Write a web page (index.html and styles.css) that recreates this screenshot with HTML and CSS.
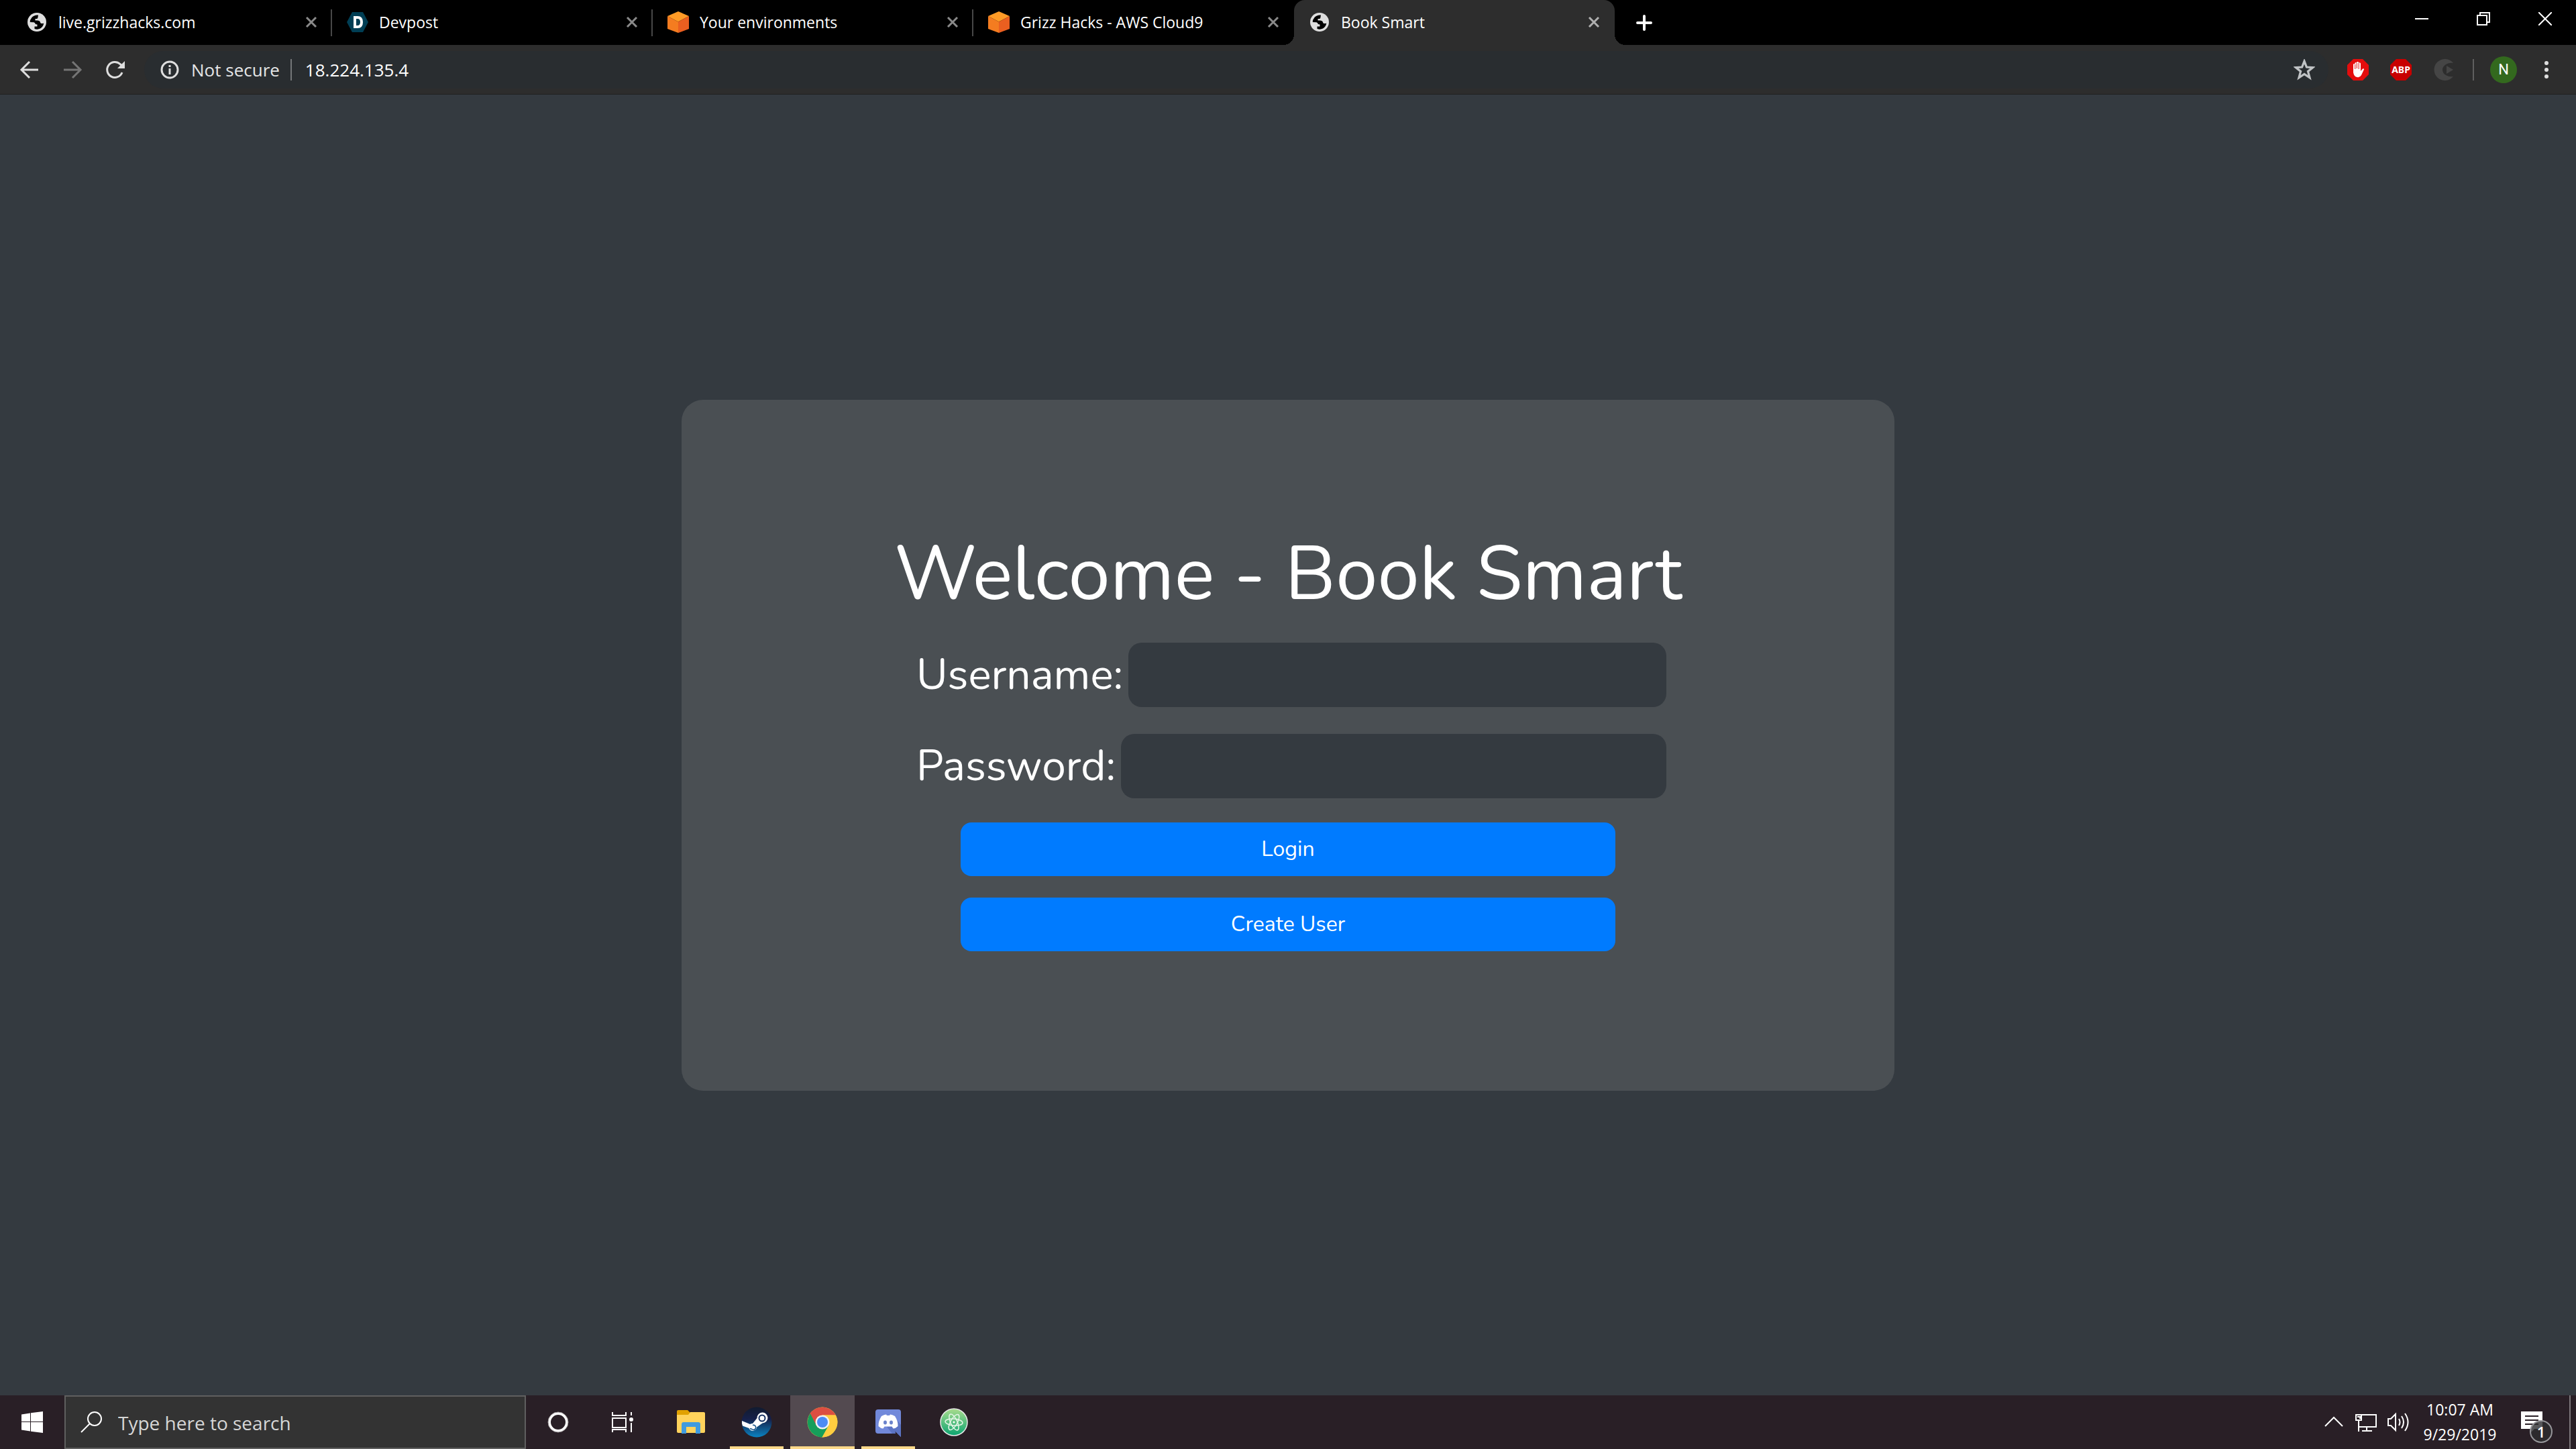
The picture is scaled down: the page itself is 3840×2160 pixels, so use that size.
FILE: index.html
```html
<!DOCTYPE html>
<html lang="en">
<head>
    <meta charset="UTF-8">
    <meta name="viewport" content="width=device-width, initial-scale=1.0">
    <title>Book Smart</title>
    <link rel="stylesheet" href="styles.css">
</head>
<body>
    <!-- shared icons -->
    <svg class="sprite" aria-hidden="true">
        <symbol id="globe" viewBox="0 0 28 28">
            <circle cx="14" cy="14" r="14" fill="#dedede"/>
            <path class="cut" d="M16 3.500Q10 3 6.500 7Q3.500 10.500 3.800 14L9.500 14.300Q11.500 15 11.800 17L14.500 17.500V20.500H10.500V24Q15 25.500 19 23.500Q23.500 21 24.300 15.500Q22 16.500 19.500 15.500L18.500 13Q17.500 11.500 15 11.500H11.500V9H14Q15.500 8.500 15.500 6.500Z"/>
        </symbol>
        <symbol id="close" viewBox="0 0 18 18">
            <path d="M2 2L16 16M16 2L2 16" fill="none" stroke="currentColor" stroke-width="3"/>
        </symbol>
        <symbol id="cube" viewBox="0 0 32 32">
            <path d="M16 0L32 7L16 15.500L0 7Z" fill="#ff9b26"/>
            <path d="M0 7L16 15.500V32L0 26Z" fill="#f47c20"/>
            <path d="M32 7L16 15.500V32L32 26Z" fill="#ea5f20"/>
        </symbol>
    </svg>

    <header class="browser">
        <nav class="tabs">
            <div class="tab">
                <svg class="tab-icon globe"><use href="#globe"/></svg>
                <a class="tab-title" href="#">live.grizzhacks.com</a>
                <button class="tab-close" aria-label="Close tab"><svg><use href="#close"/></svg></button>
            </div>
            <div class="tab">
                <svg class="tab-icon" viewBox="0 0 32 32">
                    <path d="M8 1H24L32 16L24 31H8L0 16Z" fill="#003e54"/>
                    <path d="M10 7H16Q24 7 24 16Q24 25 16 25H10ZM14 11V21H16Q20 21 20 16Q20 11 16 11Z" fill="#fff" fill-rule="evenodd"/>
                </svg>
                <a class="tab-title" href="#">Devpost</a>
                <button class="tab-close" aria-label="Close tab"><svg><use href="#close"/></svg></button>
            </div>
            <div class="tab">
                <svg class="tab-icon"><use href="#cube"/></svg>
                <a class="tab-title" href="#">Your environments</a>
                <button class="tab-close" aria-label="Close tab"><svg><use href="#close"/></svg></button>
            </div>
            <div class="tab">
                <svg class="tab-icon"><use href="#cube"/></svg>
                <a class="tab-title" href="#">Grizz Hacks - AWS Cloud9</a>
                <button class="tab-close" aria-label="Close tab"><svg><use href="#close"/></svg></button>
            </div>
            <div class="tab active">
                <svg class="tab-icon globe"><use href="#globe"/></svg>
                <a class="tab-title" href="#">Book Smart</a>
                <button class="tab-close" aria-label="Close tab"><svg><use href="#close"/></svg></button>
            </div>
            <button class="new-tab" aria-label="New tab">
                <svg viewBox="0 0 24 24"><path d="M12 2V22M2 12H22" stroke="#fff" stroke-width="4" stroke-linecap="round"/></svg>
            </button>
            <div class="window-buttons">
                <button aria-label="Minimize"><svg viewBox="0 0 20 20"><path d="M0 10H20" stroke="#fff" stroke-width="2"/></svg></button>
                <button aria-label="Restore"><svg viewBox="0 0 20 20"><path d="M1 5H15V19H1ZM5 5V1H19V15H15" fill="none" stroke="#fff" stroke-width="2"/></svg></button>
                <button aria-label="Close"><svg viewBox="0 0 20 20"><path d="M0 0L20 20M20 0L0 20" stroke="#fff" stroke-width="2"/></svg></button>
            </div>
        </nav>
        <div class="toolbar">
            <button class="nav-btn" aria-label="Back"><svg viewBox="0 0 32 32"><path d="M29 16H4M16 4L4 16L16 28" fill="none" stroke="#dedede" stroke-width="3"/></svg></button>
            <button class="nav-btn" aria-label="Forward"><svg viewBox="0 0 32 32"><path d="M3 16H28M16 4L28 16L16 28" fill="none" stroke="#757575" stroke-width="3"/></svg></button>
            <button class="nav-btn" aria-label="Reload"><svg viewBox="0 0 32 32"><path d="M26 20A11.500 11.500 0 1 1 23 7.500L26 10" fill="none" stroke="#dedede" stroke-width="3"/><path d="M30 3V14H19Z" fill="#dedede"/></svg></button>
            <div class="omnibox">
                <svg class="info" viewBox="0 0 28 28"><circle cx="14" cy="14" r="12" fill="none" stroke="#dedede" stroke-width="3"/><path d="M14 12V21M14 7V10" stroke="#dedede" stroke-width="3"/></svg>
                <span class="not-secure">Not secure</span>
                <input class="url" type="text" value="18.224.135.4" aria-label="Address">
                <button class="star" aria-label="Bookmark this page"><svg viewBox="0 0 30 30"><path d="M15 3L18.200 11.300L27 11.800L20.100 17.300L22.500 26L15 21L7.500 26L9.900 17.300L3 11.800L11.800 11.300Z" fill="none" stroke="#c0c3c5" stroke-width="3"/></svg></button>
            </div>
            <div class="extensions">
                <button aria-label="AdBlock"><svg viewBox="0 0 32 32"><path d="M9 0H23L32 9V23L23 32H9L0 23V9Z" fill="#e40d0d"/><path d="M9 8Q10 6 11.500 8V6Q12.500 4 14 6V5Q15.500 3 17 5V6Q18.500 4.500 20 6.500V18L23 14.500Q25 13.500 25 15.500L21 24Q18.500 28 15 27Q10 26.500 9 20Z" fill="#fff"/><path d="M11.700 8V15M14.300 6V14M17.200 6V15" stroke="#e40d0d"/></svg></button>
                <button aria-label="Adblock Plus"><svg viewBox="0 0 32 32"><path d="M9 0H23L32 9V23L23 32H9L0 23V9Z" fill="#c80000"/><text class="abp" x="16" y="21" text-anchor="middle">ABP</text></svg></button>
                <button aria-label="Video extension"><svg viewBox="0 0 32 32"><path d="M30 6A16 16 0 1 0 30 26Q24 27 19 24Q14 21 14 16Q14 11 19 8Q24 5 30 6Z" fill="#454545"/><path d="M20 10L30 16L20 22Z" fill="#454545"/></svg></button>
            </div>
            <button class="avatar" aria-label="Profile">N</button>
            <button class="menu" aria-label="Menu"><svg viewBox="0 0 32 32"><circle cx="16" cy="6" r="3" fill="#dedede"/><circle cx="16" cy="16" r="3" fill="#dedede"/><circle cx="16" cy="26" r="3" fill="#dedede"/></svg></button>
        </div>
    </header>

    <main class="page">
        <form class="card">
            <h1>Welcome - Book Smart</h1>
            <div class="field">
                <label for="username">Username:</label>
                <input type="text" id="username">
            </div>
            <div class="field">
                <label for="password">Password:</label>
                <input type="password" id="password">
            </div>
            <button class="btn" type="button">Login</button>
            <button class="btn" type="button">Create User</button>
        </form>
    </main>

    <footer class="taskbar">
        <button class="start" aria-label="Start"><svg viewBox="0 0 32 32"><path d="M0 4.500L13 2.500V15H0ZM14 2.300L32 0V15H14ZM0 16H13V29.500L0 27.500ZM14 16H32V32L14 29.700Z" fill="#fff"/></svg></button>
        <label class="search">
            <svg viewBox="0 0 32 32"><circle cx="21" cy="11" r="10" fill="none" stroke="#fff" stroke-width="2"/><path d="M14 18L1 31" stroke="#fff" stroke-width="2"/></svg>
            <input type="text" placeholder="Type here to search" aria-label="Search">
        </label>
        <button class="task" aria-label="Cortana"><svg viewBox="0 0 48 48"><circle cx="24" cy="24" r="13" fill="none" stroke="#fff" stroke-width="4"/><circle cx="24" cy="24" r="15" fill="none" stroke="#9b9698" stroke-width="1"/></svg></button>
        <button class="task" aria-label="Task View"><svg viewBox="0 0 48 48"><path d="M9 9V14H29V9M9 18H29V32H9ZM9 39V35H29V39M37 9V14M37 25V39" fill="none" stroke="#fff" stroke-width="2"/><circle cx="37" cy="20" r="3" fill="#fff"/></svg></button>
        <div class="apps">
            <button class="task" aria-label="File Explorer"><svg viewBox="0 0 48 48"><path d="M3 8Q3 6 5 6H19L23 10H43Q45 10 45 12V14H3Z" fill="#e1a100"/><path d="M3 13H20L23 9H43Q45 9 45 11V38Q45 40 43 40H5Q3 40 3 38Z" fill="#ffd35c"/><path d="M10 41V27Q10 24 13 24H35Q38 24 38 27V41H31V31H17V41Z" fill="#3f9be0"/></svg></button>
            <button class="task open" aria-label="Steam">
                <svg viewBox="0 0 48 48">
                    <defs><linearGradient id="steam" x1="0" y1="0" x2="0" y2="1"><stop offset="0" stop-color="#111b2f"/><stop offset="0.400" stop-color="#16204a"/><stop offset="1" stop-color="#0a84c2"/></linearGradient></defs>
                    <circle cx="24" cy="24" r="22.500" fill="url(#steam)"/>
                    <path d="M2 22L14 27Q16 26 18 26L24.500 18A8 8 0 1 1 32.500 25.500L24 31.500A6 6 0 0 1 12.500 33L3 29.500Q1.500 26 2 22Z" fill="#fff"/>
                    <circle cx="32" cy="18" r="4.500" fill="#fff" stroke="#173263" stroke-width="2"/>
                    <path d="M14 33.500L17 34.500A3.500 3.500 0 1 0 18 28.500" fill="none" stroke="#125086" stroke-width="1.500"/>
                </svg>
            </button>
            <button class="task current" aria-label="Chrome">
                <svg viewBox="0 0 48 48">
                    <circle cx="24" cy="24" r="22.500" fill="#ffcd40"/>
                    <path d="M24 24L14.500 29.500L5 12A22.500 22.500 0 0 1 43.700 13.500H24Z" fill="#dc4e41"/>
                    <path d="M5.800 11A22.500 22.500 0 0 0 23.500 46.500L33 29.500L24 24L15 29Z" fill="#169e5a"/>
                    <path d="M33 29.500L23.500 46.500A22.500 22.500 0 0 0 43.700 13.500H24L30 17Z" fill="#ffcd40"/>
                    <circle cx="24" cy="24" r="10.500" fill="#f1f1f1"/>
                    <circle cx="24" cy="24" r="8" fill="#4c8bf5"/>
                </svg>
            </button>
            <button class="task open" aria-label="Discord">
                <svg viewBox="0 0 48 48">
                    <path d="M9 5H39Q43 5 43 9V46L34 37L35 41H9Q5 41 5 37V9Q5 5 9 5Z" fill="#7289da"/>
                    <path d="M22 31L30 41H35L34 37L43 46V28L38 22Z" fill="#5c74c4"/>
                    <path d="M14 15Q18 12.500 21 12.500L22 14H26L27 12.500Q30 12.500 34 15Q39 23 38.500 30Q35 33.500 31.500 33.500L29.500 30.500H18.500L16.500 33.500Q13 33.500 9.500 30Q9 23 14 15Z" fill="#fff"/>
                    <ellipse cx="19.500" cy="24.500" rx="2.500" ry="3" fill="#6b83cb"/>
                    <ellipse cx="28.500" cy="24.500" rx="2.500" ry="3" fill="#6b83cb"/>
                </svg>
            </button>
            <button class="task" aria-label="Atom">
                <svg viewBox="0 0 48 48">
                    <defs><linearGradient id="atom" x1="0" y1="0" x2="0" y2="1"><stop offset="0" stop-color="#a9dc8e"/><stop offset="1" stop-color="#0ba470"/></linearGradient></defs>
                    <circle cx="24" cy="24" r="20" fill="url(#atom)" stroke="#e9e9e9" stroke-width="1.500"/>
                    <g fill="none" stroke="#e4f5e6" stroke-width="1.500">
                        <ellipse cx="24" cy="24" rx="13" ry="5" transform="rotate(5 24 24)"/>
                        <ellipse cx="24" cy="24" rx="13" ry="5" transform="rotate(65 24 24)"/>
                        <ellipse cx="24" cy="24" rx="13" ry="5" transform="rotate(120 24 24)"/>
                    </g>
                    <circle cx="24" cy="24" r="1.500" fill="#fff"/>
                </svg>
            </button>
        </div>
        <div class="tray">
            <button aria-label="Show hidden icons"><svg viewBox="0 0 32 32"><path d="M3 22L16 9L29 22" fill="none" stroke="#fff" stroke-width="2"/></svg></button>
            <button aria-label="Network"><svg viewBox="0 0 32 32"><path d="M8 5H31V23H6M17 23V28M10 29H25M1 5H9V13H1ZM5 13V30M3 8H7V11" fill="none" stroke="#fff" stroke-width="2"/></svg></button>
            <button aria-label="Volume"><svg viewBox="0 0 32 32"><path d="M1 11H5L12 4V28L5 21H1ZM17 11Q20 16 17 21M21 7Q27 16 21 25M26 3Q35 16 26 29" fill="none" stroke="#fff" stroke-width="2"/></svg></button>
            <button class="clock"><span>10:07 AM</span><span>9/29/2019</span></button>
            <button class="notifications" aria-label="Notifications"><svg viewBox="0 0 32 32"><path d="M0 0H32V26H20L14 32V26H0Z" fill="#fff"/><path d="M6 7H26M6 13H26M6 19H26" stroke="#291f26" stroke-width="2"/></svg><span class="badge">1</span></button>
            <button class="show-desktop" aria-label="Show desktop"></button>
        </div>
    </footer>
</body>
</html>
```
FILE: styles.css
```css
* {
    box-sizing: border-box;
}
html, body {
    margin: 0;
    padding: 0;
    height: 100vh;
    overflow: hidden;
}
body {
    display: flex;
    flex-direction: column;
    background-color: #343a40;
    color: white;
    font-family: "Segoe UI", "Open Sans", "Noto Sans", sans-serif;
}
button, input {
    margin: 0;
    padding: 0;
    border: none;
    background: none;
    color: inherit;
    font-family: inherit;
}
button {
    display: flex;
    align-items: center;
    justify-content: center;
    flex: none;
    cursor: pointer;
}
svg {
    flex: none;
}
.sprite {
    position: absolute;
    width: 0;
    height: 0;
}

/* tab strip */
.browser {
    flex: none;
    border-bottom: 1px solid #202020;
}
.tabs {
    display: flex;
    height: 67px;
    padding-left: 17px;
    background-color: #000;
}
.tab {
    display: flex;
    align-items: center;
    flex: 0 1 478px;
    min-width: 0;
    padding: 0 22px 2px;
    position: relative;
    color: #8a8a8a;
}
.tab::after {
    content: "";
    position: absolute;
    right: 0;
    top: 14px;
    width: 2px;
    height: 40px;
    background-color: #484848;
}
.tab-icon {
    width: 32px;
    height: 32px;
}
.tab-icon.globe {
    padding: 2px;
}
.cut {
    fill: #000;
}
.tab-title {
    flex: 1;
    min-width: 0;
    margin-left: 16px;
    overflow: hidden;
    color: white;
    font-size: 23px;
    line-height: 32px;
    text-decoration: none;
    white-space: nowrap;
}
.tab-close svg {
    width: 18px;
    height: 18px;
}
.tab.active {
    background-color: #2d2d2d;
    border-radius: 16px 16px 0 0;
    color: #b0b0b0;
}
.tab.active::before, .tab.active::after {
    content: "";
    position: absolute;
    top: auto;
    bottom: 0;
    width: 16px;
    height: 16px;
    background: radial-gradient(circle at 0 0, #000 16px, #2d2d2d 16px);
}
.tab.active::before {
    left: -16px;
}
.tab.active::after {
    right: -16px;
    background: radial-gradient(circle at 100% 0, #000 16px, #2d2d2d 16px);
}
.tab:has(+ .active)::after {
    display: none;
}
.new-tab {
    width: 88px;
}
.new-tab svg {
    width: 24px;
    height: 24px;
}
.window-buttons {
    display: flex;
    margin-left: auto;
}
.window-buttons button {
    width: 92px;
    height: 56px;
}
.window-buttons svg {
    width: 20px;
    height: 20px;
}

/* toolbar */
.toolbar {
    display: flex;
    align-items: center;
    height: 73px;
    padding: 0 28px 0 12px;
    background-color: #2d2d2d;
}
.nav-btn {
    width: 64px;
    height: 56px;
}
.nav-btn svg {
    width: 32px;
    height: 32px;
}
.omnibox {
    display: flex;
    align-items: center;
    flex: 1;
    min-width: 0;
    height: 56px;
    margin-left: 11px;
    padding: 0 20px 0 24px;
    border-radius: 28px;
    background-color: #292d30;
}
.info {
    width: 28px;
    height: 28px;
}
.not-secure {
    margin-left: 18px;
    padding-right: 16px;
    border-right: 2px solid #757779;
    color: #e4e5e6;
    font-size: 26px;
    line-height: 32px;
    white-space: nowrap;
}
.url {
    flex: 1;
    min-width: 0;
    margin-left: 20px;
    font-size: 26px;
    line-height: 32px;
}
.star svg {
    width: 32px;
    height: 32px;
}
.extensions {
    display: flex;
    gap: 32px;
    margin-left: 28px;
    padding-right: 27px;
    border-right: 2px solid #5f5f5f;
}
.extensions svg, .menu svg {
    width: 32px;
    height: 32px;
}
.abp {
    fill: #fff;
    font-family: "Noto Sans", sans-serif;
    font-size: 14px;
    font-weight: 700;
}
.avatar {
    width: 40px;
    height: 40px;
    margin: 0 28px 0 24px;
    border-radius: 50%;
    background-color: #33691e;
    font-family: Roboto, sans-serif;
    font-size: 22px;
}

/* login page */
.page {
    display: flex;
    align-items: center;
    justify-content: center;
    flex: 1;
    min-height: 0;
}
.card {
    display: flex;
    flex-direction: column;
    align-items: center;
    width: 100%;
    max-width: 1808px;
    padding: 194px 340px 208px;
    border-radius: 32px;
    background-color: #4a4f53;
    font-family: Nunito, Lato, sans-serif;
}
h1 {
    margin: 0 0 34px;
    font-size: 112px;
    font-weight: 400;
    line-height: 134px;
    white-space: nowrap;
}
.field {
    display: flex;
    align-items: center;
    gap: 8px;
    width: 100%;
    margin-bottom: 40px;
    padding-left: 10px;
    font-size: 64px;
    line-height: 96px;
}
.field input {
    flex: 1;
    min-width: 0;
    height: 96px;
    padding: 0 24px;
    border-radius: 20px;
    background-color: #343a40;
    font-size: 48px;
}
.btn {
    width: 976px;
    max-width: 100%;
    height: 80px;
    margin-bottom: 32px;
    border-radius: 16px;
    background-color: #007bff;
    font-size: 32px;
}
.btn:hover {
    background-color: #0069d9;
}
.field + .btn {
    margin-top: -4px;
}
.btn:last-child {
    margin-bottom: 0;
}

/* taskbar */
.taskbar {
    display: flex;
    flex: none;
    height: 80px;
    background-color: #291f26;
}
.start {
    width: 96px;
}
.start svg {
    width: 32px;
    height: 32px;
}
.search {
    display: flex;
    align-items: center;
    gap: 24px;
    width: 688px;
    padding: 0 22px;
    border: 2px solid #5f5f5f;
    background-color: #333;
}
.search svg {
    width: 32px;
    height: 32px;
}
.search input {
    flex: 1;
    min-width: 0;
    padding-top: 2px;
    font-size: 28px;
    line-height: 40px;
}
.search input::placeholder {
    color: #d6d6d6;
    opacity: 1;
}
.task {
    width: 96px;
    position: relative;
}
.task svg {
    width: 48px;
    height: 48px;
}
.apps {
    display: flex;
    gap: 2px;
    margin-left: 6px;
}
.task.current {
    background-color: #534a50;
}
.task.open::after, .task.current::after {
    content: "";
    position: absolute;
    left: 8px;
    right: 8px;
    bottom: 0;
    height: 4px;
    background-color: #ffd98a;
}
.task.current::after {
    left: 0;
    right: 0;
}
.tray {
    display: flex;
    margin-left: auto;
}
.tray button {
    width: 48px;
}
.tray svg {
    width: 32px;
    height: 32px;
}
.tray .clock {
    flex-direction: column;
    width: 120px;
    margin-left: 8px;
    font-size: 23px;
    line-height: 37px;
}
.tray .notifications {
    position: relative;
    width: 94px;
    margin-right: 9px;
}
.badge {
    position: absolute;
    left: 44px;
    top: 37px;
    width: 34px;
    height: 34px;
    border: 2px solid #96969a;
    border-radius: 50%;
    background-color: rgba(45, 45, 47, 0.8);
    font-size: 22px;
    font-weight: 600;
    line-height: 30px;
    text-align: center;
}
.tray .show-desktop {
    width: 10px;
    border-left: 2px solid #7c767a;
}
```
